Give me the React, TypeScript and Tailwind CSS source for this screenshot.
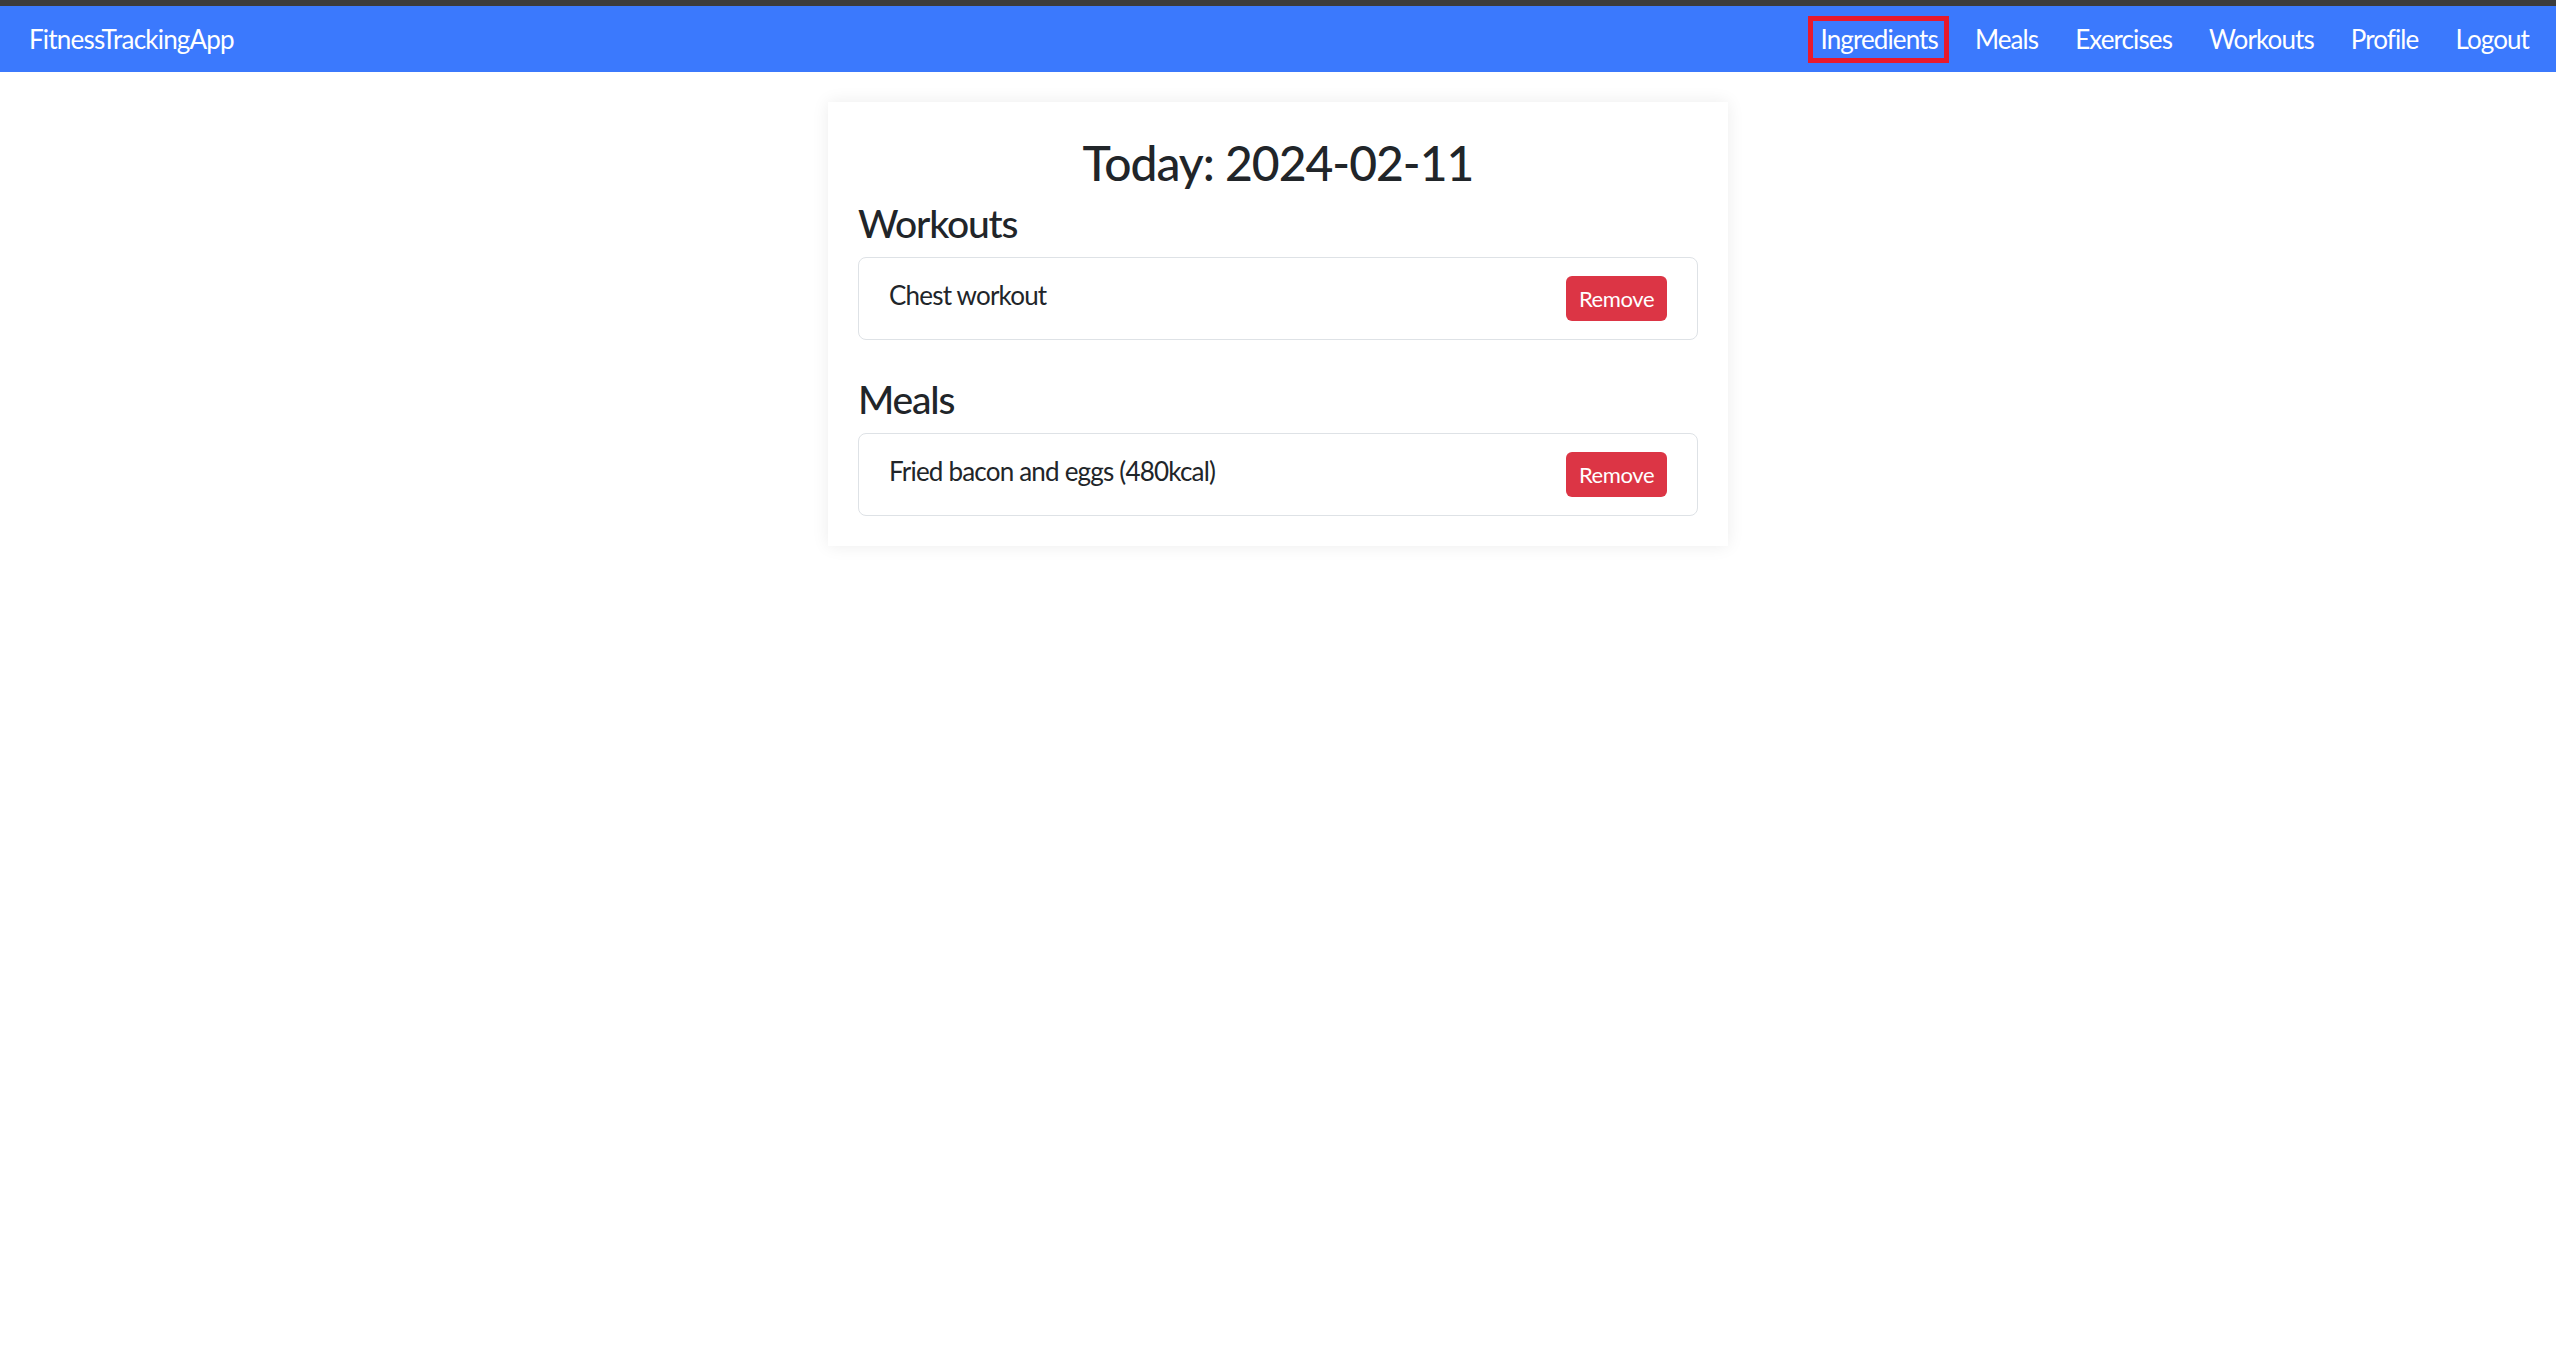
import React from "react";

const font = { fontFamily: '"Lato", "Liberation Sans", sans-serif' };

function Item({ text }: { text: string }) {
  return (
    <div className="flex justify-between border border-[#dee2e6] rounded-[8px] pl-[30px] pr-[30px] pt-[18px] pb-[18px]">
      <div className="text-[26px] leading-[39px] text-[#212529] tracking-[-0.8px]">{text}</div>
      <button className="w-[101px] h-[45px] rounded-[6px] bg-[#dc3545] text-white text-[22px] leading-[45px] text-center tracking-[-0.4px]">
        Remove
      </button>
    </div>
  );
}

export default function App() {
  const links = ["Ingredients", "Meals", "Exercises", "Workouts", "Profile", "Logout"];
  return (
    <div className="min-h-screen bg-white" style={font}>
      <div className="h-[6px] bg-[#3c3c3c]" />
      <nav className="h-[66px] bg-[#3b79fd] flex items-center justify-between pl-[29px] pr-[27px] text-white text-[26px]">
        <div className="tracking-[-0.8px]">FitnessTrackingApp</div>
        <div className="flex items-center gap-[37px]">
          {links.map((l, i) => (
            <div key={l} className="relative">
              {i === 0 && (
                <div className="absolute left-[-13px] right-[-11px] top-[-4px] bottom-[-4px] border-[5px] border-[#e8192c]" />
              )}
              <span className="relative leading-[39px] tracking-[-0.9px]">{l}</span>
            </div>
          ))}
        </div>
      </nav>
      <div className="w-[900px] mx-auto mt-[30px] bg-white p-[30px] shadow-[0_0_16px_rgba(0,0,0,0.08)] text-[#212529]">
        <h1 className="text-center text-[48px] leading-[62px] font-medium mb-[6px] tracking-[-1px]">Today: 2024-02-11</h1>
        <h2 className="text-[39px] leading-[47px] font-medium mb-[10px] tracking-[-1.2px]">Workouts</h2>
        <Item text="Chest workout" />
        <h2 className="text-[39px] leading-[47px] font-medium mt-[36px] mb-[10px] tracking-[-1.2px]">Meals</h2>
        <Item text="Fried bacon and eggs (480kcal)" />
      </div>
    </div>
  );
}
